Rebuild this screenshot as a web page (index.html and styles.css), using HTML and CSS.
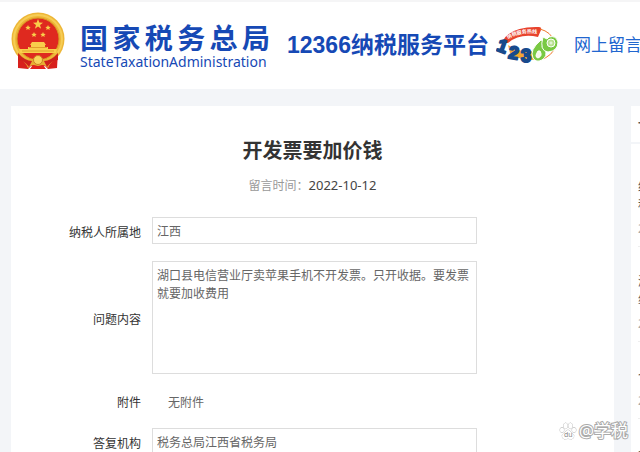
FILE: index.html
```html
<!DOCTYPE html>
<html lang="zh-CN">
<head>
  <meta charset="UTF-8" />
  <meta name="viewport" content="width=device-width, initial-scale=1.0"/>
  <title>12366纳税服务平台</title>
  <link rel="stylesheet" href="styles.css">
</head>
<body>

  <header class="header">
    <svg class="emblem" viewBox="0 0 54 58" aria-hidden="true">
      <path d="M7 40 L7 56 L17 57 L20 54 L27 57 L34 54 L37 57 L46 56 L47 40 Z" fill="#d8201d"/>
      <circle cx="27" cy="27" r="26.5" fill="#edb637"/>
      <circle cx="27" cy="27" r="24" fill="none" stroke="#f6cd55" stroke-width="2"/>
      <circle cx="27" cy="27" r="21" fill="#df291f" stroke="#d99522" stroke-width="1"/>
      <path d="M27 7 L28.3 10.6 L32 10.7 L29 13 L30.1 16.7 L27 14.5 L23.9 16.7 L25 13 L22 10.7 L25.7 10.6 Z" fill="#f9cf4b"/>
      <g fill="#f9cf4b">
        <path d="M17 13 l.8 1.7 1.9.2-1.4 1.3.4 1.9-1.7-1-1.7 1 .4-1.9-1.4-1.3 1.9-.2z"/>
        <path d="M37 13 l.8 1.7 1.9.2-1.4 1.3.4 1.9-1.7-1-1.7 1 .4-1.9-1.4-1.3 1.9-.2z"/>
        <path d="M23 20 l.8 1.7 1.9.2-1.4 1.3.4 1.9-1.7-1-1.7 1 .4-1.9-1.4-1.3 1.9-.2z"/>
        <path d="M32 20 l.8 1.7 1.9.2-1.4 1.3.4 1.9-1.7-1-1.7 1 .4-1.9-1.4-1.3 1.9-.2z"/>
        <path d="M21 30 H33 L35 33 H19 Z"/>
        <path d="M20 33 H34 V35 H37 V37 H46 L45 41 H9 L8 37 H17 V35 H20 Z"/>
      </g>
      <path d="M18 35.5 H36 M11 39 H43" stroke="#d98a20" stroke-width=".7"/>
      <path d="M7 40 Q15 49 22 47 Q27 40 32 47 Q39 49 47 40 L46 47 Q39 50 37 56 Q33 51 27 54 Q21 51 17 56 Q14 49 8 47 Z" fill="#e8ad32"/>
      <path d="M7 41 Q14 49 21 49 L18 55 Q14 49 7 48 Z M47 41 Q40 49 33 49 L36 55 Q40 49 47 48 Z" fill="#cf1f1c"/>
      <circle cx="27" cy="48" r="4.5" fill="#f8d35c" stroke="#cc8122" stroke-width="1"/>
      <path d="M19 57 L22 53 L27 55 L32 53 L35 57 Z" fill="#e3211d"/>
    </svg>
    <div class="brand">
      <div class="brand-cn">国家税务总局</div>
      <div class="brand-en">StateTaxationAdministration</div>
    </div>
    <div class="platform">12366纳税服务平台</div>
    <svg class="hotline" viewBox="0 0 62 40" role="img" aria-label="12366">
      <path d="M12 20 Q30 32 52 22 L47 33 Q28 39 14 28 Z" fill="#f6a72f"/>
      <path d="M16 19 Q28 27 42 19 L40 14 Q26 12 16 19 Z" fill="#fff"/>
      <path d="M6 17 Q14 1 43 2 Q46 2 45 5 L42 12 Q24 8 12 18 L6 18 Z" fill="#e8432d"/>
      <path d="M44 4 Q55 7 58 16 M60 20 Q57 31 44 35" fill="none" stroke="#f07a2d" stroke-width="1"/>
      <path id="arc" d="M12 14 Q25 6 46 9" fill="none"/>
      <text class="hotline-text"><textPath href="#arc">纳税服务热线</textPath></text>
      <g class="hotline-digits">
        <text x="2" y="27" transform="rotate(20 6 20)">1</text>
        <text x="13" y="34" transform="rotate(10 18 26)">2</text>
        <text x="25" y="37">3</text>
      </g>
      <g stroke="#fff" stroke-width="1">
        <path d="M45 15 Q33 25 37 33 Q40 38 46 35 Q52 31 49 25 L46 22 L49 17 Z" fill="#7ac943"/>
        <path d="M47 12 Q43 26 52 27 Q62 26 62 17 Q60 10 53 12 L51 14 Z" fill="#7ac943"/>
        <path d="M42 26 Q38 32 42 33 Q47 31 44 26 Z" fill="#f6f9e8"/>
        <circle cx="55" cy="18" r="4" fill="#b7e08e"/>
        <circle cx="55" cy="18" r="1" fill="#7ac943"/>
      </g>
    </svg>
    <nav class="nav">
      <a href="#">网上留言</a>
    </nav>
  </header>

  <div class="container">
    <main class="card">
      <h1>开发票要加价钱</h1>
      <p class="time">留言时间：<span>2022-10-12</span></p>

      <form class="detail">
        <label for="area">纳税人所属地</label>
        <input type="text" id="area" value="江西" readonly>

        <label for="question">问题内容</label>
        <textarea id="question" readonly>湖口县电信营业厅卖苹果手机不开发票。只开收据。要发票就要加收费用</textarea>

        <label for="attachment">附件</label>
        <output id="attachment">无附件</output>

        <label for="office">答复机构</label>
        <input type="text" id="office" value="税务总局江西省税务局" readonly>
      </form>
    </main>

    <aside class="sidebar">
      <h2>一</h2>
      <ul>
        <li><p>纳<br>税</p><small>2</small></li>
        <li><p>湖<br>绍</p><small>2</small></li>
        <li><p>个</p><small>2</small></li>
        <li><p>个</p></li>
      </ul>
    </aside>
  </div>

  <div class="watermark">
    <svg viewBox="0 0 18 18" aria-hidden="true">
      <g fill="#fff" stroke="#bbb" stroke-width="1">
        <ellipse cx="3" cy="8" rx="2" ry="2.6"/>
        <ellipse cx="6.6" cy="3.8" rx="2" ry="2.8"/>
        <ellipse cx="11.4" cy="3.8" rx="2" ry="2.8"/>
        <ellipse cx="15" cy="8" rx="2" ry="2.6"/>
        <path d="M9 8 Q11 8 12.5 11 Q16 13 14.5 16 Q13 18 9 16.5 Q5 18 3.5 16 Q2 13 5.5 11 Q7 8 9 8 Z"/>
      </g>
      <text x="5" y="15">du</text>
    </svg>
    <span>@学税</span>
  </div>

</body>
</html>
```

FILE: styles.css
```css
* {
  box-sizing: border-box;
}

body {
  font-family: "Noto Sans", "Noto Sans CJK SC", sans-serif;
  font-size: 12px;
  margin: 0;
  height: 100vh;
  overflow: hidden;
  position: relative;
  background: #f3f5f8;
  color: #333;
}

.header {
  display: flex;
  align-items: center;
  height: 89px;
  padding: 0 0 2px 11px;
  border-top: 2px solid #f5f5f6;
  background: #fff;
  white-space: nowrap;
  overflow: hidden;
}

.emblem {
  flex: none;
  align-self: flex-start;
  width: 54px;
  height: 58px;
  margin-top: 10px;
}

.brand {
  flex: none;
  width: 190px;
  margin: 4px 0 0 15px;
  color: #1649b5;
}

.brand-cn {
  font-family: "Noto Sans CJK SC", sans-serif;
  font-size: 28px;
  line-height: 30px;
  font-weight: bold;
  text-align-last: justify;
}

.brand-en {
  font-size: 14px;
  line-height: 20px;
}

.platform {
  flex: none;
  margin-left: 17px;
  font-family: "Liberation Sans", "Noto Sans CJK SC", sans-serif;
  font-size: 23px;
  line-height: 28px;
  font-weight: bold;
  color: #1649b5;
}

.hotline {
  flex: none;
  width: 62px;
  height: 40px;
  margin-left: 7px;
}

.hotline-text {
  font-size: 5px;
  font-weight: bold;
  fill: #fff;
}

.hotline-digits {
  font-family: "Liberation Sans", sans-serif;
  font-size: 18px;
  font-weight: bold;
  fill: #184a8c;
  stroke: #184a8c;
  stroke-width: 2px;
  stroke-linejoin: round;
}

.nav {
  margin-left: 16px;
}

.nav a {
  font-size: 17px;
  line-height: 24px;
  color: #2166cf;
  text-decoration: none;
}

.container {
  display: flex;
  gap: 17px;
  padding: 17px 0 0 11px;
}

.card {
  flex: 1;
  padding: 30px 0 20px;
  background: #fff;
}

.card h1 {
  margin: 0;
  font-size: 20px;
  line-height: 30px;
  text-align: center;
}

.time {
  margin: 8px 0 20px;
  line-height: 23px;
  text-align: center;
  color: #999;
}

.time span {
  font-size: 13px;
  color: #444;
}

.detail {
  display: grid;
  grid-template-columns: 130px 1fr;
  gap: 17px 11px;
  align-items: center;
  padding-right: 137px;
}

.detail label {
  padding-top: 4px;
  line-height: 16px;
  text-align: right;
}

.detail input,
.detail textarea {
  display: block;
  width: 100%;
  height: 27px;
  padding: 0 4px;
  border: 1px solid #ddd;
  background: #fff;
  font-family: inherit;
  font-size: 12px;
  line-height: 18px;
  color: #666;
  outline: none;
}

.detail textarea {
  height: 113px;
  padding: 5px 4px;
  resize: none;
}

.detail output {
  padding: 4px 0 0 16px;
  line-height: 16px;
  color: #666;
}

.sidebar {
  flex: 0 0 9px;
  height: 100vh;
  background: #fff;
  overflow: hidden;
  color: #555;
}

.sidebar h2 {
  margin: 0;
  padding-left: 7px;
  border-bottom: 2px solid #f3f5f8;
  font-size: 12px;
  line-height: 36px;
}

.sidebar ul {
  margin: 0;
  padding: 34px 0 0 7px;
  list-style: none;
}

.sidebar li {
  margin-bottom: 26px;
  padding-bottom: 8px;
  border-bottom: 1px solid #eee;
  white-space: nowrap;
}

.sidebar p {
  margin: 0 0 6px;
  line-height: 18px;
}

.sidebar small {
  display: block;
  font-size: 12px;
  line-height: 18px;
  color: #aaa;
}

.watermark {
  position: absolute;
  right: 12px;
  bottom: 10px;
  display: flex;
  align-items: center;
  gap: 2px;
  font-size: 17px;
  line-height: 22px;
  color: #fff;
  -webkit-text-stroke: 2px #aaa;
  paint-order: stroke fill;
}

.watermark svg {
  width: 18px;
  height: 18px;
}

.watermark text {
  font-size: 7px;
  fill: #888;
  -webkit-text-stroke: 0;
}
```
